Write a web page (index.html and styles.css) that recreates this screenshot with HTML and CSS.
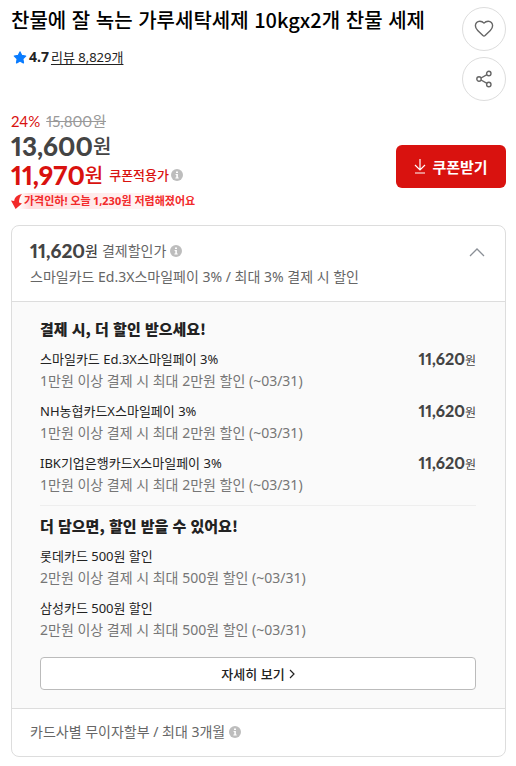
FILE: index.html
```html
<!DOCTYPE html>
<html lang="ko">
<head>
  <meta charset="UTF-8">
  <meta name="viewport" content="width=device-width, initial-scale=1.0">
  <title>찬물에 잘 녹는 가루세탁세제 10kgx2개 찬물 세제</title>
  <link rel="stylesheet" href="styles.css">
</head>
<body>
  <svg class="defs" width="0" height="0" aria-hidden="true">
    <symbol id="info" viewBox="0 0 12 12">
      <circle cx="6" cy="6" r="6" fill="#bdbdbd"/>
      <path d="M5 2.4h2v1.5H5zM4.6 5h2.3v3.4h.8v1H4.4v-1h.9V6h-.7z" fill="#fff"/>
    </symbol>
  </svg>

  <main class="container">
    <header class="item-header">
      <div class="item-info">
        <h1>찬물에 잘 녹는 가루세탁세제 10kgx2개 찬물 세제</h1>
        <div class="review">
          <svg width="14" height="13" viewBox="0 0 14 13" aria-hidden="true">
            <path d="M7 1l1.7 3.5 3.9.6-2.8 2.7.6 4L7 10l-3.4 1.8.6-4L1.4 5.1l3.9-.6z" fill="#0a7cff" stroke="#0a7cff" stroke-width="1.4" stroke-linejoin="round"/>
          </svg>
          <strong>4.7</strong>
          <a href="#review">리뷰 8,829개</a>
        </div>
      </div>
      <div class="item-actions">
        <button type="button" class="round-btn" aria-label="찜하기">
          <svg width="20" height="18" viewBox="0 0 20 18" fill="none" stroke="#666" stroke-width="1.4" stroke-linejoin="round">
            <path d="M10 3.1C8.600 1.500 7.200 1.200 5.800 1.200 3.200 1.200 1.400 3.200 1.400 5.700c0 2.100 1 3.400 2.300 4.700L8.900 15.400q1.100 1 2.200 0L16.300 10.400C17.600 9.100 18.600 7.800 18.600 5.700 18.600 3.200 16.800 1.200 14.200 1.200c-1.400 0-2.800.3-4.200 1.900z"/>
          </svg>
        </button>
        <button type="button" class="round-btn" aria-label="공유하기">
          <svg width="16" height="18" viewBox="0 0 16 18" fill="none" stroke="#666" stroke-width="1.4">
            <circle cx="3" cy="9" r="2.2"/>
            <circle cx="12.8" cy="3.5" r="2.2"/>
            <circle cx="12.8" cy="14.5" r="2.2"/>
            <path d="M5 8l6-3.400M5 10l6 3.400"/>
          </svg>
        </button>
      </div>
    </header>

    <section class="price">
      <div class="price-info">
        <p class="origin"><span class="rate">24%</span> <del>15,800원</del></p>
        <p class="sale"><strong>13,600</strong>원</p>
        <p class="sale coupon"><strong>11,970</strong>원 <span class="label">쿠폰적용가</span><svg class="info" aria-hidden="true"><use href="#info"/></svg></p>
        <p class="drop">
          <svg width="13" height="15" viewBox="0 0 13 15" aria-hidden="true">
            <path d="M11 0C6 1 3.500 3.500 3.200 7L0 6.400 4.600 15 11 9.400 8 8.600C8 5 9 2 11 0z" fill="#f22a2a"/>
          </svg>
          <span>가격인하! 오늘 1,230원 저렴해졌어요</span>
        </p>
      </div>
      <button type="button" class="coupon-btn">
        <svg width="12" height="15" viewBox="0 0 12 15" fill="none" stroke="#fff" stroke-width="1.2" aria-hidden="true">
          <path d="M6 0v11M1 6l5 5 5-5M1 14h10"/>
        </svg>
        쿠폰받기
      </button>
    </section>

    <section class="card">
      <div class="card-head">
        <div>
          <p class="card-price"><strong>11,620</strong><b>원</b> <span>결제할인가</span><svg class="info" aria-hidden="true"><use href="#info"/></svg></p>
          <p class="card-desc">스마일카드 Ed.3X스마일페이 3% / 최대 3% 결제 시 할인</p>
        </div>
        <button type="button" class="toggle" aria-label="접기" aria-expanded="true">
          <svg width="16" height="9" viewBox="0 0 16 9" fill="none" stroke="#8a8f96" stroke-width="1.3">
            <path d="M1 8l7-7 7 7"/>
          </svg>
        </button>
      </div>

      <div class="card-body">
        <h2>결제 시, 더 할인 받으세요!</h2>
        <ul>
          <li>
            <div>
              <p class="name">스마일카드 Ed.3X스마일페이 3%</p>
              <p class="cond">1만원 이상 결제 시 최대 2만원 할인 (~03/31)</p>
            </div>
            <p class="amount"><strong>11,620</strong>원</p>
          </li>
          <li>
            <div>
              <p class="name">NH농협카드X스마일페이 3%</p>
              <p class="cond">1만원 이상 결제 시 최대 2만원 할인 (~03/31)</p>
            </div>
            <p class="amount"><strong>11,620</strong>원</p>
          </li>
          <li>
            <div>
              <p class="name">IBK기업은행카드X스마일페이 3%</p>
              <p class="cond">1만원 이상 결제 시 최대 2만원 할인 (~03/31)</p>
            </div>
            <p class="amount"><strong>11,620</strong>원</p>
          </li>
        </ul>
        <h2 class="more-title">더 담으면, 할인 받을 수 있어요!</h2>
        <ul>
          <li>
            <div>
              <p class="name">롯데카드 500원 할인</p>
              <p class="cond">2만원 이상 결제 시 최대 500원 할인 (~03/31)</p>
            </div>
          </li>
          <li>
            <div>
              <p class="name">삼성카드 500원 할인</p>
              <p class="cond">2만원 이상 결제 시 최대 500원 할인 (~03/31)</p>
            </div>
          </li>
        </ul>
        <button type="button" class="detail-btn">
          자세히 보기
          <svg width="6" height="10" viewBox="0 0 6 10" fill="none" stroke="#222" stroke-width="1.2" aria-hidden="true">
            <path d="M1 1l4 4-4 4"/>
          </svg>
        </button>
      </div>

      <div class="card-foot">카드사별 무이자할부 / 최대 3개월<svg class="info" aria-hidden="true"><use href="#info"/></svg></div>
    </section>
  </main>
</body>
</html>
```
FILE: styles.css
```css
* {
  box-sizing: border-box;
}
body {
  margin: 0;
  background: #fff;
  color: #222;
  font-family: "Noto Sans", "Noto Sans CJK KR", sans-serif;
  font-size: 14px;
  line-height: 20px;
}
h1, h2, p, ul {
  margin: 0;
  padding: 0;
}
ul {
  list-style: none;
}
button {
  padding: 0;
  font-family: "Noto Sans CJK KR", sans-serif;
  cursor: pointer;
}
.defs {
  position: absolute;
}
.container {
  padding: 7px 10px 9px 11px;
}
.info {
  width: 12px;
  height: 12px;
  margin-left: 4px;
}

/* title */
.item-header {
  display: flex;
  justify-content: space-between;
}
h1 {
  color: #000;
  font-family: "Noto Sans CJK KR", sans-serif;
  font-size: 20px;
  font-weight: 500;
  line-height: 26px;
}
.review {
  display: flex;
  align-items: center;
  gap: 2px;
  margin-top: 14px;
  padding-left: 2px;
}
.review a {
  color: #222;
  font-size: 13px;
  text-underline-offset: 2px;
}
.item-actions {
  display: flex;
  flex-direction: column;
  gap: 6px;
}
.round-btn {
  display: flex;
  align-items: center;
  justify-content: center;
  width: 44px;
  height: 44px;
  border: 1px solid #ddd;
  border-radius: 50%;
  background: #fff;
}

/* price */
.price {
  display: flex;
  justify-content: space-between;
  align-items: flex-end;
  margin-top: 10px;
}
.price-info {
  font-family: Lato, "Noto Sans CJK KR", sans-serif;
  font-variant-numeric: proportional-nums;
}
.origin {
  color: #999;
  font-size: 15px;
  line-height: 20px;
}
.rate {
  color: #d9120f;
  margin-right: 2px;
}
.sale {
  display: flex;
  align-items: center;
  height: 29px;
  color: #444;
  font-size: 20px;
  font-weight: 500;
}
.sale strong {
  font-size: 26px;
  font-weight: 900;
}
.coupon {
  color: #d9120f;
}
.label {
  margin-left: 6px;
  font-size: 13px;
}
.coupon .info {
  margin-left: 2px;
}
.drop {
  display: flex;
  align-items: center;
  margin-top: 4px;
  height: 16px;
  color: #f22a2a;
  font-family: "Noto Sans", "Noto Sans CJK KR", sans-serif;
  font-size: 11px;
  font-weight: 700;
  line-height: 14px;
  background: linear-gradient(90deg, #fff 4%, #ffdede 10%, #fff);
}
.coupon-btn {
  display: flex;
  align-items: center;
  justify-content: center;
  gap: 6px;
  width: 110px;
  height: 43px;
  margin-bottom: 21px;
  border: 0;
  border-radius: 6px;
  background: #d9120f;
  color: #fff;
  font-size: 15px;
  font-weight: 700;
}

/* payment discount */
.card {
  margin-top: 16px;
  border: 1px solid #ddd;
  border-radius: 8px;
  overflow: hidden;
}
.card-head {
  display: flex;
  justify-content: space-between;
  align-items: flex-start;
  padding: 13px 20px 14px 18px;
}
.card-price {
  display: flex;
  align-items: center;
  height: 24px;
  color: #666;
  font-family: Lato, "Noto Sans CJK KR", sans-serif;
  font-variant-numeric: proportional-nums;
}
.card-price strong {
  color: #444;
  font-size: 19px;
  font-weight: 900;
}
.card-price b {
  margin-right: 4px;
  color: #444;
  font-weight: 500;
}
.card-desc {
  margin-top: 4px;
  color: #666;
}
.toggle {
  display: flex;
  padding: 9px 0;
  border: 0;
  background: none;
}
.card-body {
  padding: 16px 29px 18px 28px;
  border-top: 1px solid #ddd;
  border-bottom: 1px solid #ddd;
  background: #fafafa;
}
h2 {
  margin-bottom: 9px;
  font-family: "Noto Sans CJK KR", sans-serif;
  font-size: 15px;
  font-weight: 900;
  line-height: 22px;
}
.more-title {
  margin-top: 10px;
  padding-top: 9px;
  border-top: 1px solid #eee;
}
li {
  display: flex;
  justify-content: space-between;
}
li + li {
  margin-top: 10px;
}
.name,
.cond {
  line-height: 21px;
}
.name {
  font-size: 13px;
}
.cond {
  color: #767676;
}
.amount {
  color: #444;
  font-family: Lato, "Noto Sans CJK KR", sans-serif;
  font-size: 12px;
  font-variant-numeric: proportional-nums;
}
.amount strong {
  font-size: 16px;
  font-weight: 900;
}
.detail-btn {
  display: flex;
  align-items: center;
  justify-content: center;
  gap: 4px;
  width: 100%;
  height: 33px;
  margin-top: 17px;
  border: 1px solid #bbb;
  border-radius: 4px;
  background: #fff;
  color: #222;
  font-size: 13px;
  font-weight: 500;
}
.card-foot {
  display: flex;
  align-items: center;
  padding: 13px 18px 14px;
  color: #666;
}
```
